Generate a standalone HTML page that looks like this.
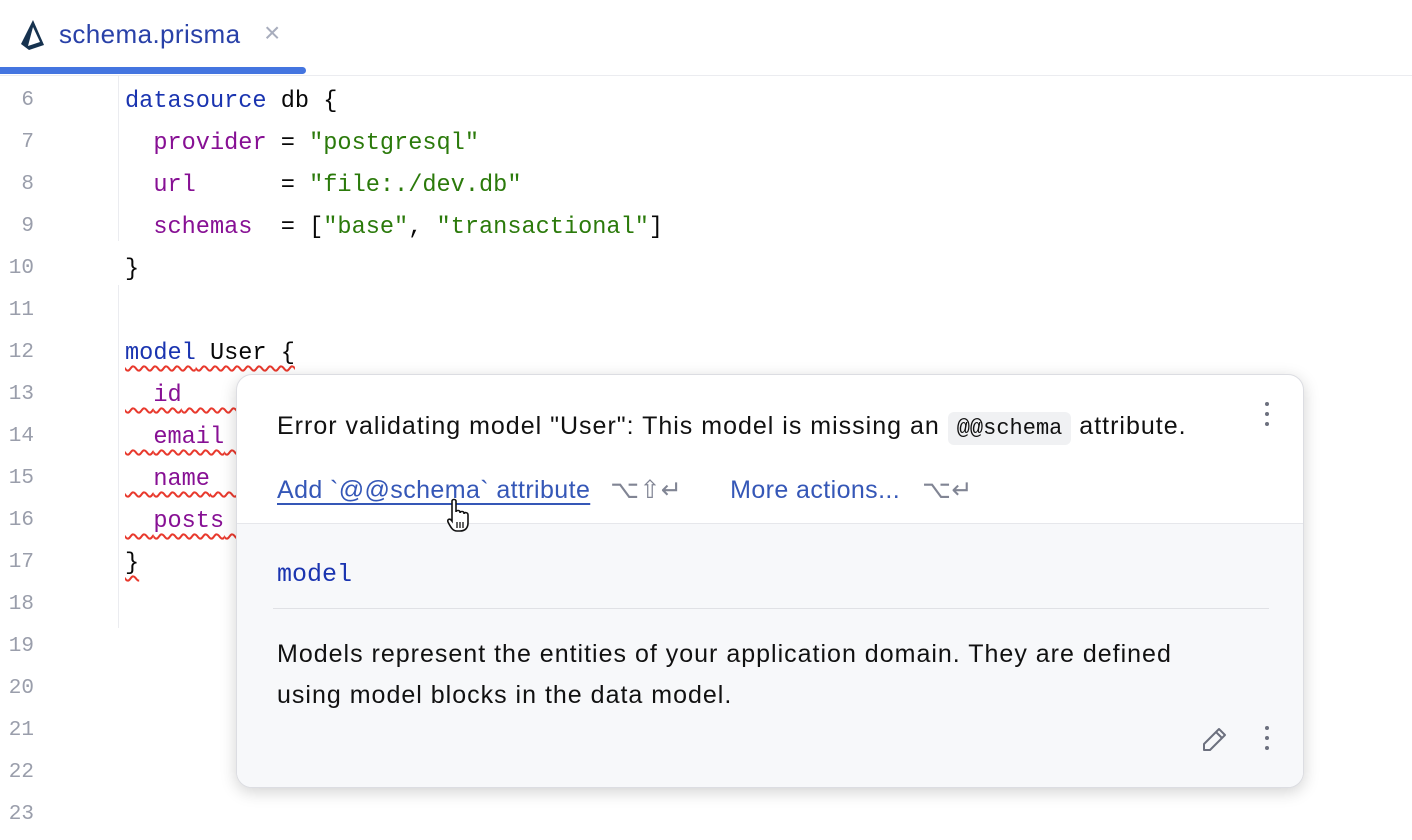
<!DOCTYPE html>
<html><head><meta charset="utf-8"><style>
html,body{margin:0;padding:0;width:1412px;height:840px;overflow:hidden;background:#fff;}
body{position:relative;font-family:"Liberation Sans",sans-serif;}
.tabbar{position:absolute;left:0;top:0;width:1412px;height:75px;border-bottom:1px solid #ebecf0;}
.tabname{position:absolute;left:59px;top:19px;font-size:26px;letter-spacing:0.4px;color:#2941a8;}
.tabx{position:absolute;left:264px;top:17px;font-size:28px;color:#a8adbd;}
.tabline{position:absolute;left:0;top:67px;width:306px;height:7px;background:#4475e0;border-radius:0 4px 4px 0;}
.gut{position:absolute;left:0;width:34px;text-align:right;font-family:"Liberation Mono",monospace;font-size:21px;color:#9a9eab;}
.code{position:absolute;left:125px;font-family:"Liberation Mono",monospace;font-size:23.6px;color:#080808;white-space:pre;}
.kw{color:#1a34b0}.pr{color:#871094}.st{color:#2b7a0b}
.sq{text-decoration:underline wavy #e8392d;text-decoration-thickness:1.5px;text-underline-offset:6px;}
.guide{position:absolute;left:118px;width:1px;background:#ebecf0;}
.pop{position:absolute;left:236px;top:374px;width:1068px;height:414px;border-radius:16px;background:#fff;box-shadow:0 4px 16px rgba(0,0,0,.18);border:1px solid #dcdde2;box-sizing:border-box;overflow:hidden;}
.low{position:absolute;left:0;top:148px;width:100%;height:266px;background:#f7f8fa;border-top:1px solid #e6e7eb;}
.t{position:absolute;font-size:25px;letter-spacing:1px;color:#111;white-space:nowrap;}
.chip{font-family:"Liberation Mono",monospace;font-size:22px;letter-spacing:0;background:#f0f1f3;border-radius:6px;padding:4px 9px;}
.lnk{color:#3557b7;}
.sc{color:#818594;}
.dots{position:absolute;width:4px;}
.dots i{display:block;width:4px;height:4px;border-radius:2px;background:#6c707e;margin-bottom:6px;}
</style></head><body>
<div class="tabbar">
<svg style="position:absolute;left:20px;top:19px" width="26" height="32" viewBox="0 0 26 32"><path d="M13 1 L1 25 L9 31 L24 26 Z" fill="#16324f"/><path d="M13 8 L8 27 L20 23 Z" fill="#fff"/></svg>
<div class="tabname">schema.prisma</div>
<div class="tabx">×</div>
<div class="tabline"></div>
</div>
<div class="guide" style="top:76px;height:165px"></div>
<div class="guide" style="top:285px;height:343px"></div>

<div class="gut" style="top:89px">6</div>
<div class="gut" style="top:131px">7</div>
<div class="gut" style="top:173px">8</div>
<div class="gut" style="top:215px">9</div>
<div class="gut" style="top:257px">10</div>
<div class="gut" style="top:299px">11</div>
<div class="gut" style="top:341px">12</div>
<div class="gut" style="top:383px">13</div>
<div class="gut" style="top:425px">14</div>
<div class="gut" style="top:467px">15</div>
<div class="gut" style="top:509px">16</div>
<div class="gut" style="top:551px">17</div>
<div class="gut" style="top:593px">18</div>
<div class="gut" style="top:635px">19</div>
<div class="gut" style="top:677px">20</div>
<div class="gut" style="top:719px">21</div>
<div class="gut" style="top:761px">22</div>
<div class="gut" style="top:803px">23</div>

<div class="code" style="top:88px"><span class="kw">datasource</span> db {</div>
<div class="code" style="top:130px">  <span class="pr">provider</span> = <span class="st">"postgresql"</span></div>
<div class="code" style="top:172px">  <span class="pr">url</span>      = <span class="st">"file:./dev.db"</span></div>
<div class="code" style="top:214px">  <span class="pr">schemas</span>  = [<span class="st">"base"</span>, <span class="st">"transactional"</span>]</div>
<div class="code" style="top:256px">}</div>
<div class="code" style="top:340px"><span class="sq"><span class="kw">model</span> User {</span></div>
<div class="code" style="top:382px"><span class="sq">  <span class="pr">id</span>       </span></div>
<div class="code" style="top:424px"><span class="sq">  <span class="pr">email</span>    </span></div>
<div class="code" style="top:466px"><span class="sq">  <span class="pr">name</span>     </span></div>
<div class="code" style="top:508px"><span class="sq">  <span class="pr">posts</span>    </span></div>
<div class="code" style="top:550px"><span class="sq">}</span></div>

<div class="pop">
<div class="t" style="left:40px;top:37px">Error validating model "User": This model is missing an <span class="chip">@@schema</span> attribute.</div>
<div class="dots" style="left:1028px;top:27px"><i></i><i></i><i></i></div>
<div class="t" style="left:40px;top:100px;letter-spacing:0.4px"><span class="lnk" style="text-decoration:underline;text-underline-offset:5px">Add `@@schema` attribute</span><span class="sc" style="margin-left:20px">⌥⇧↵</span><span class="lnk" style="margin-left:48px">More actions...</span><span class="sc" style="margin-left:22px">⌥↵</span></div>
<div class="low">
<div class="t" style="left:40px;top:36px;font-family:'Liberation Mono',monospace;font-size:25px;letter-spacing:0;color:#1a34b0;">model</div>
<div style="position:absolute;left:36px;top:84px;width:996px;height:1px;background:#e0e1e5"></div>
<div class="t" style="left:40px;top:110px;line-height:41px">Models represent the entities of your application domain. They are defined<br>using model blocks in the data model.</div>
<svg style="position:absolute;left:964px;top:201px" width="28" height="28" viewBox="0 0 28 28"><path d="M3 25 L3 19 L18 4 L24 10 L9 25 Z M15 7 L21 13" fill="none" stroke="#6c707e" stroke-width="2" stroke-linejoin="round"/></svg>
<div class="dots" style="left:1028px;top:202px"><i></i><i></i><i></i></div>
</div>
</div>
<svg style="position:absolute;left:444px;top:498px" width="34" height="36" viewBox="0 0 34 36"><path d="M8 3 C8 1 12 1 12 3 L12 14 C12 12 16 12 16 14 L16 15 C16 13 20 13 20 15 L20 16 C20 14 24 14 24 17 L24 25 C24 30 21 33 16 33 L13 33 C9 33 7 30 4 24 C3 21 6 20 8 23 Z" fill="#fff" stroke="#111" stroke-width="1.6"/><path d="M13 24v6M16 24v6M19 24v6" stroke="#111" stroke-width="1.3"/></svg>
</body></html>
